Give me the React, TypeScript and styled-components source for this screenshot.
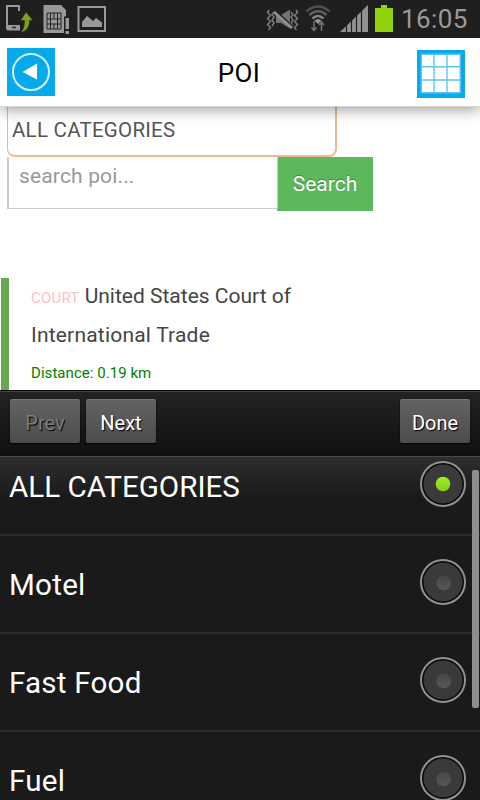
import React from "react";
import styled, { createGlobalStyle } from "styled-components";

const GlobalStyle = createGlobalStyle`
  * { box-sizing: border-box; }
  body { margin: 0; background: #fff; font-family: Roboto, "Liberation Sans", sans-serif; }
`;

const Screen = styled.div`
  width: 480px;
  height: 800px;
  display: flex;
  flex-direction: column;
  overflow: hidden;
  background: #fff;
`;

const StatusBar = styled.div`
  height: 38px;
  flex: none;
  display: flex;
  justify-content: space-between;
  background: #1f1f1f;
`;

const StatusGroup = styled.div`
  display: flex;
`;

const Clock = styled.span`
  width: 80px;
  padding-left: 1px;
  font-size: 26px;
  line-height: 38px;
  color: #9a9a9a;
  letter-spacing: 0.4px;
`;

const Header = styled.header`
  height: 69px;
  flex: none;
  display: flex;
  align-items: flex-start;
  justify-content: space-between;
  padding: 10px 15px 0 7px;
  background: #fff;
  border-bottom: 1px solid #d4d4d4;
  box-shadow: 0 2px 14px rgba(0, 0, 0, 0.42);
  clip-path: inset(0 0 -20px 0);
  z-index: 1;
`;

const IconButton = styled.button<{ $drop?: number }>`
  width: 48px;
  height: 48px;
  margin-top: ${(p) => p.$drop ?? 0}px;
  padding: 0;
  border: 0;
  background: #06a9ea;
`;

const Title = styled.h1`
  margin: 0;
  padding-left: 6px;
  font-size: 26px;
  font-weight: 400;
  line-height: 50px;
  letter-spacing: 0.3px;
  color: #000;
`;

const Content = styled.main`
  height: 283px;
  flex: none;
  overflow: hidden;
  background: #fff;
`;

const CategorySelect = styled.div`
  width: 330px;
  height: 60px;
  margin: -10px 0 0 7px;
  padding: 12px 0 0 4px;
  border: 1px solid #eab98c;
  border-right-width: 2px;
  border-bottom: 2px solid #edbb90;
  border-radius: 8px;
  font-size: 20.5px;
  line-height: 40px;
  letter-spacing: 0.25px;
  color: #555;
`;

const SearchRow = styled.div`
  display: flex;
  padding-left: 7px;
`;

const SearchInput = styled.div`
  width: 271px;
  height: 52px;
  padding-left: 10px;
  border: 1px solid #ccc;
  border-left-width: 2px;
  border-top: 0;
  font-size: 21px;
  line-height: 38px;
  letter-spacing: 0.15px;
  color: #999;
  z-index: 1;
`;

const SearchButton = styled.button`
  width: 96px;
  height: 54px;
  margin-left: -1px;
  padding: 0;
  border: 0;
  background: #5cb85c;
  font: 400 21px/54px Roboto, sans-serif;
  color: #fff;
  text-shadow: 0 -1px 1px rgba(0, 0, 0, 0.3);
`;

const PoiCard = styled.article`
  display: flow-root;
  width: 340px;
  height: 130px;
  margin: 67px 0 0 1px;
  padding-left: 22px;
  border-left: 8px solid #6aa84f;
`;

const PoiName = styled.h2`
  margin: -1px 0 0;
  font-size: 21px;
  font-weight: 400;
  line-height: 39px;
  color: #444;
`;

const PoiTag = styled.span`
  font-size: 15px;
  line-height: 1;
  letter-spacing: 0.2px;
  color: #ffc0cb;
`;

const PoiNameTail = styled.span`
  letter-spacing: 0.2px;
`;

const Distance = styled.div`
  padding-top: 6px;
  font-size: 15px;
  line-height: 24px;
  letter-spacing: 0.05px;
  color: #008000;
`;

const Toolbar = styled.div`
  height: 67px;
  flex: none;
  display: flex;
  align-items: flex-start;
  gap: 6px;
  padding: 8px 10px 0;
  border-top: 1px solid #090909;
  border-bottom: 1px solid #4a4a4a;
  background: linear-gradient(#232323, #101010);
  box-shadow: inset 0 1px 0 #444, inset 0 -1px 0 #0c0c0c;
`;

const ToolButton = styled.button<{ $disabled?: boolean; $end?: boolean }>`
  width: 70px;
  height: 44px;
  padding: 3px 0 0;
  margin-left: ${(p) => (p.$end ? "auto" : "0")};
  border: 0;
  border-top: 1px solid #777;
  border-radius: 2px;
  background: linear-gradient(#636363, #4c4c4c);
  box-shadow: 0 1px 2px #000;
  font: 400 20px/40px Roboto, sans-serif;
  color: ${(p) => (p.$disabled ? "#7d7d7d" : "#fff")};
  text-shadow: 1px 1px 1px #000;
`;

const PickerList = styled.div`
  position: relative;
  flex: 1;
  min-height: 0;
  overflow: hidden;
  background: linear-gradient(#2d2d2d, #1a1a1a 42px);
`;

const Options = styled.div`
  margin-top: -19px;
`;

const Option = styled.div<{ $tracking: number }>`
  height: 98px;
  display: flex;
  align-items: flex-start;
  justify-content: space-between;
  padding: 22px 13px 0 9px;
  border-bottom: 2px solid #2b2b2b;
  font-size: 29.6px;
  line-height: 54px;
  letter-spacing: ${(p) => p.$tracking}px;
  color: #fff;
`;

const ScrollThumb = styled.div`
  position: absolute;
  top: 13px;
  right: 1px;
  width: 7px;
  height: 238px;
  border-radius: 2px;
  background: #8e8e8e;
`;

const DeviceIcons = () => (
  <svg width="110" height="38" viewBox="0 0 110 38" fill="none">
    <path d="M7 26V6h12v5" stroke="#999" strokeWidth="2" />
    <path d="M6 25h14v5.500H7.500L6 29z" fill="#999" />
    <path d="M12 27.500h4" stroke="#222" strokeWidth="1.500" />
    <path d="M26 12l7 8.500h-3.500c0 7-3 11-9.500 12 3-2 4.500-5.500 4.500-12h-4z" fill="#7da019" stroke="#1f1f1f" strokeWidth="0.500" />
    <path d="M43.500 5H61l5 5v6.500h-2V33H43.500z" fill="#999" />
    <path d="M47 13h14v16H47z" stroke="#222" />
    <path d="M50.500 19h7v5h-7zM50.500 13v6M54 13v6M57.500 13v6M50.500 24v5M54 24v5M57.500 24v5M47 19h3.500M47 24h3.500M57.500 19H61M57.500 24H61" stroke="#222" />
    <path d="M65.500 18h3.500v11h-3.500zM65.500 31h3.500v3h-3.500z" fill="#999" />
    <path d="M78.500 7h26.500v24H78.500z" stroke="#999" strokeWidth="2" />
    <path d="M82 27v-5l5-6 6 5 3-3 6 4.500V27z" fill="#999" />
  </svg>
);

const SignalIcons = () => (
  <svg width="136" height="38" viewBox="264 0 136 38" fill="none">
    <path d="M269 10l-1.500 2.500 3 3-3 3 3 3-3 3 3 3-2 2.500M274 12l-2 2.500 2 2.500-2 3 2 3-2 3M291 12l2 2.500-2 2.500 2 3-2 3 2 3M296 10l1.500 2.500-3 3 3 3-3 3 3 3-3 3 2 2.500" stroke="#7c7c7c" strokeWidth="1.500" />
    <path d="M276 15h5l9-5.500v19L281 23h-5z" fill="#747474" />
    <path d="M274 9.500l19 17.500" stroke="#1f1f1f" strokeWidth="2" />
    <path d="M274 12l18 16" stroke="#929292" strokeWidth="2.600" />
    <g strokeWidth="2.500">
      <path d="M306.500 11.500q11.500-10 23 0" stroke="#505050" />
      <path d="M309.500 15q8.500-7.500 17 0" stroke="#606060" />
      <path d="M312.500 18.500q5.500-5 11 0" stroke="#858585" />
    </g>
    <path d="M314.500 20.500q3.500-2.500 7 0L318 24z" fill="#999" />
    <path d="M314 21v9M311.500 27.500l2.500 3 2.500-3M321.500 31v-9M319 25l2.500-3 2.500 3" stroke="#707070" strokeWidth="1.600" />
    <path d="M340 32l28-27v27z" fill="#929292" />
    <path d="M346.500 19v13M351.500 14v18M356.500 9v23M361.500 5v27" stroke="#1f1f1f" strokeWidth="1.200" />
    <path d="M375 8h6V5h6v3h6v24h-18z" fill="#91d10c" />
  </svg>
);

const BackIcon = () => (
  <svg width="48" height="48" viewBox="0 0 48 48" fill="none" display="block">
    <circle cx="24" cy="24" r="18" stroke="#d8f2ff" strokeWidth="2" />
    <path d="M15.500 24L30 15.500v16z" fill="#fff" />
  </svg>
);

const GridIcon = () => (
  <svg width="48" height="48" viewBox="0 0 48 48" display="block">
    <path d="M4 4h39.500v39H4z" fill="#fff" />
    <path d="M4.300 4.300h38.900v38.400H4.300zM17 4v39M30 4v39M4 16.800h39M4 30h39" fill="none" stroke="#5cc6f3" strokeWidth="1.400" />
  </svg>
);

const Radio = ({ checked }: { checked: boolean }) => {
  const id = checked ? "radioOn" : "radioOff";
  return (
    <svg width="48" height="48" viewBox="0 0 48 48">
      <defs>
        <linearGradient id={id} x1="0" y1="0" x2="0" y2="1">
          <stop offset="0" stopColor={checked ? "#a4ec28" : "#464646"} />
          <stop offset="1" stopColor={checked ? "#7dd016" : "#585858"} />
        </linearGradient>
      </defs>
      <circle cx="24" cy="24" r="22" fill="#080808" stroke="#929292" strokeWidth="2" />
      <circle cx="24" cy="24" r="19.500" fill="#3a3a3a" />
      <circle cx={checked ? 24 : 24.700} cy={checked ? 24 : 25} r="7.300" fill={`url(#${id})`} />
    </svg>
  );
};

const categories = [
  { name: "ALL CATEGORIES", tracking: 0 },
  { name: "Motel", tracking: 0.25 },
  { name: "Fast Food", tracking: 0.2 },
  { name: "Fuel", tracking: 0.2 },
];

export default function App() {
  return (
    <>
      <GlobalStyle />
      <Screen>
        <StatusBar>
          <DeviceIcons />
          <StatusGroup>
            <SignalIcons />
            <Clock>16:05</Clock>
          </StatusGroup>
        </StatusBar>
        <Header>
          <IconButton aria-label="Back"><BackIcon /></IconButton>
          <Title>POI</Title>
          <IconButton aria-label="Menu" $drop={2}><GridIcon /></IconButton>
        </Header>
        <Content>
          <CategorySelect>ALL CATEGORIES</CategorySelect>
          <SearchRow>
            <SearchInput>search poi...</SearchInput>
            <SearchButton>Search</SearchButton>
          </SearchRow>
          <PoiCard>
            <PoiName>
              <PoiTag>COURT</PoiTag> United States Court of
              <br />
              <PoiNameTail>International Trade</PoiNameTail>
            </PoiName>
            <Distance>Distance: 0.19 km</Distance>
          </PoiCard>
        </Content>
        <Toolbar>
          <ToolButton $disabled>Prev</ToolButton>
          <ToolButton>Next</ToolButton>
          <ToolButton $end>Done</ToolButton>
        </Toolbar>
        <PickerList>
          <Options>
            {categories.map(({ name, tracking }, index) => (
              <Option key={name} $tracking={tracking}>
                {name}
                <Radio checked={index === 0} />
              </Option>
            ))}
          </Options>
          <ScrollThumb />
        </PickerList>
      </Screen>
    </>
  );
}
